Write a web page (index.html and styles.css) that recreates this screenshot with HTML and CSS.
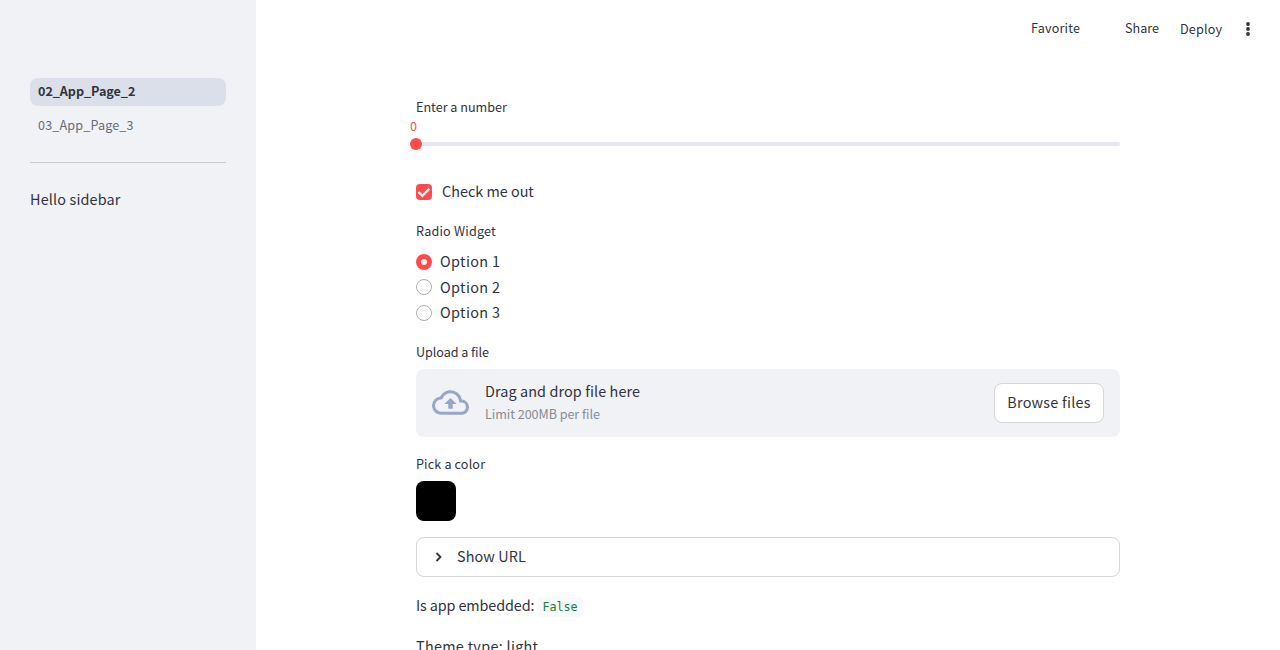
FILE: index.html
```html
<!DOCTYPE html>
<html lang="en">
<head>
<meta charset="utf-8">
<title>App Page 2</title>
<link rel="stylesheet" href="styles.css">
</head>
<body>
<div class="app">
  <aside class="sidebar">
    <nav class="nav">
      <a class="nav-link active">02_App_Page_2</a>
      <a class="nav-link">03_App_Page_3</a>
    </nav>
    <hr class="divider">
    <p class="text greeting">Hello sidebar</p>
  </aside>
  <main class="main">
    <header class="toolbar">
      <span class="favorite">Favorite</span>
      <span class="share">Share</span>
      <span class="deploy">Deploy</span>
      <svg class="menu" viewBox="0 0 8 16"><circle cx="4" cy="3" r="1.9"/><circle cx="4" cy="8" r="1.9"/><circle cx="4" cy="13" r="1.9"/></svg>
    </header>
    <div class="content">
      <section class="slider">
        <div class="label">Enter a number</div>
        <div class="slider-value">0</div>
        <div class="track"><div class="thumb"></div></div>
      </section>
      <label class="check-row">
        <svg class="checkbox" viewBox="0 0 16 16"><rect width="16" height="16" rx="4"/><path d="M2.5 8 6.3 11.8 13.5 4.6"/></svg>
        <span class="text check-text">Check me out</span>
      </label>
      <section class="radio">
        <div class="label radio-label">Radio Widget</div>
        <div class="options">
          <label class="option"><span class="dot selected"></span><span class="text">Option 1</span></label>
          <label class="option"><span class="dot"></span><span class="text">Option 2</span></label>
          <label class="option"><span class="dot"></span><span class="text">Option 3</span></label>
        </div>
      </section>
      <section class="upload">
        <div class="label upload-label">Upload a file</div>
        <div class="dropzone">
          <svg class="cloud" viewBox="0 0 24 24"><path d="M19.35 10.04A7.49 7.49 0 0 0 12 4C9.11 4 6.6 5.64 5.35 8.04A5.994 5.994 0 0 0 0 14c0 3.31 2.69 6 6 6h13c2.76 0 5-2.24 5-5 0-2.64-2.05-4.78-4.65-4.96zM19 18H6c-2.21 0-4-1.79-4-4 0-2.05 1.53-3.76 3.56-3.97l1.07-.11.5-.95A5.469 5.469 0 0 1 12 6c2.62 0 4.88 1.86 5.39 4.43l.3 1.5 1.53.11A2.98 2.98 0 0 1 22 15c0 1.65-1.35 3-3 3zM8 13h2.55v3h2.9v-3H16l-4-4z"/></svg>
          <div class="drop-copy">
            <div class="text drop-title">Drag and drop file here</div>
            <div class="hint">Limit 200MB per file</div>
          </div>
          <button class="browse">Browse files</button>
        </div>
      </section>
      <section class="color">
        <div class="label color-label">Pick a color</div>
        <div class="swatch"></div>
      </section>
      <div class="expander">
        <svg class="chevron" viewBox="0 0 8 10"><path d="M1.5 1 5.5 5 1.5 9"/></svg>
        <span class="text expander-text">Show URL</span>
      </div>
      <p class="text status embedded">Is app embedded: <code>False</code></p>
      <p class="text status theme">Theme type: light</p>
    </div>
  </main>
</div>
</body>
</html>
```
FILE: styles.css
```css
* { box-sizing: border-box; }

body {
  margin: 0;
  background: #fff;
  color: #31333f;
  font-family: "Noto Sans CJK JP", "Noto Sans CJK SC", "Noto Sans", sans-serif;
  font-size: 14.4px;
  line-height: 24px;
}

.app { display: flex; height: 650px; overflow: hidden; }

.sidebar { width: 256px; flex: none; padding: 78px 30px 0; background: #f0f2f6; }
.nav { display: flex; flex-direction: column; gap: 6px; }
.nav-link {
  height: 28px;
  padding: 0 8px;
  border-radius: 8px;
  font-size: 12.6px;
  line-height: 25px;
  letter-spacing: 0.15px;
  color: #6a6c76;
}
.nav-link.active { background: #dadfe9; color: #31333f; font-weight: 700; letter-spacing: -0.05px; }
.divider { height: 1px; margin: 22px 0 24px; border: 0; background: #c9cbd0; }

.text { margin: 0; font-size: 14.4px; line-height: 24px; white-space: nowrap; }
.greeting { letter-spacing: 0.16px; }

.main { flex: 1; height: 650px; overflow: hidden; }
.toolbar {
  display: flex;
  align-items: center;
  justify-content: flex-end;
  height: 58px;
  padding-right: 28px;
  font-size: 12.6px;
}
.favorite { width: 49px; margin: 0 45px 2px 0; letter-spacing: 0.2px; }
.share { width: 35px; margin: 0 20px 2px 0; }
.deploy { width: 42px; margin-right: 22px; letter-spacing: 0.16px; }
.menu { width: 8px; height: 16px; fill: #31333f; }

.content { width: 704px; margin: 39px 0 0 160px; }
.label { font-size: 12.6px; line-height: 20px; height: 20px; }

.slider { height: 83px; }
.slider-value { height: 18px; margin-left: -6px; font-size: 12.6px; line-height: 18px; color: #ff4b4b; }
.track { height: 4px; margin-top: 7px; border-radius: 4px; background: #e5e7f1; }
.thumb { position: relative; top: -4px; left: -6px; width: 12px; height: 12px; border-radius: 50%; background: #ff4b4b; }

.check-row { display: flex; align-items: center; gap: 10px; height: 24px; }
.check-text { padding-bottom: 2px; }
.checkbox { width: 16px; height: 16px; fill: #ff4b4b; }
.checkbox path { fill: none; stroke: #f0f2f6; stroke-width: 2.3; }

.radio { margin-top: 17px; }
.radio-label { letter-spacing: 0.2px; }
.options { display: flex; flex-direction: column; margin-top: 8px; }
.option { display: flex; align-items: center; gap: 8px; height: 25.6px; letter-spacing: 0.38px; }
.option .text { padding-bottom: 1.2px; }
.dot { width: 16px; height: 16px; border: 1px solid #adaeb3; border-radius: 50%; }
.dot.selected { border: 5px solid #ff4b4b; background: #f0f2f6; }

.upload { margin-top: 16px; }
.upload-label { letter-spacing: -0.05px; }
.dropzone {
  display: flex;
  align-items: center;
  height: 68px;
  margin-top: 7px;
  padding: 0 16px;
  border-radius: 8px;
  background: #f0f2f6;
}
.cloud { width: 37px; height: 37px; margin-right: 16px; fill: #98a7c7; }
.drop-copy { flex: 1; padding-bottom: 3px; }
.drop-title { letter-spacing: 0.1px; }
.hint { padding-top: 1px; font-size: 12.6px; line-height: 20px; letter-spacing: -0.05px; color: #898b93; }
.browse {
  width: 110px;
  height: 40px;
  padding: 0 0 2px;
  border: 1px solid #d6d6d9;
  border-radius: 8px;
  background: #fff;
  color: #31333f;
  font: inherit;
  letter-spacing: 0.25px;
}

.color { margin-top: 17px; }
.color-label { letter-spacing: 0.15px; }
.swatch { width: 40px; height: 40px; margin-top: 7px; border-radius: 8px; background: #000; }

.expander {
  display: flex;
  align-items: center;
  height: 40px;
  margin-top: 16px;
  padding-left: 18px;
  border: 1px solid #d6d6d9;
  border-radius: 8px;
}
.expander-text { padding-bottom: 2px; letter-spacing: 0.1px; }
.chevron { width: 8px; height: 10px; margin-right: 14px; fill: none; stroke: #31333f; stroke-width: 1.8; }

.status { height: 24px; margin-top: 16px; }
.embedded { letter-spacing: -0.12px; }
.theme { margin-top: 17px; letter-spacing: 0.3px; }
code {
  display: inline-block;
  height: 20px;
  padding: 0 5px;
  border-radius: 4px;
  background: #f8f9fb;
  color: #158237;
  font-family: "DejaVu Sans Mono", monospace;
  font-size: 11.7px;
  line-height: 20px;
  letter-spacing: 0;
}
```
